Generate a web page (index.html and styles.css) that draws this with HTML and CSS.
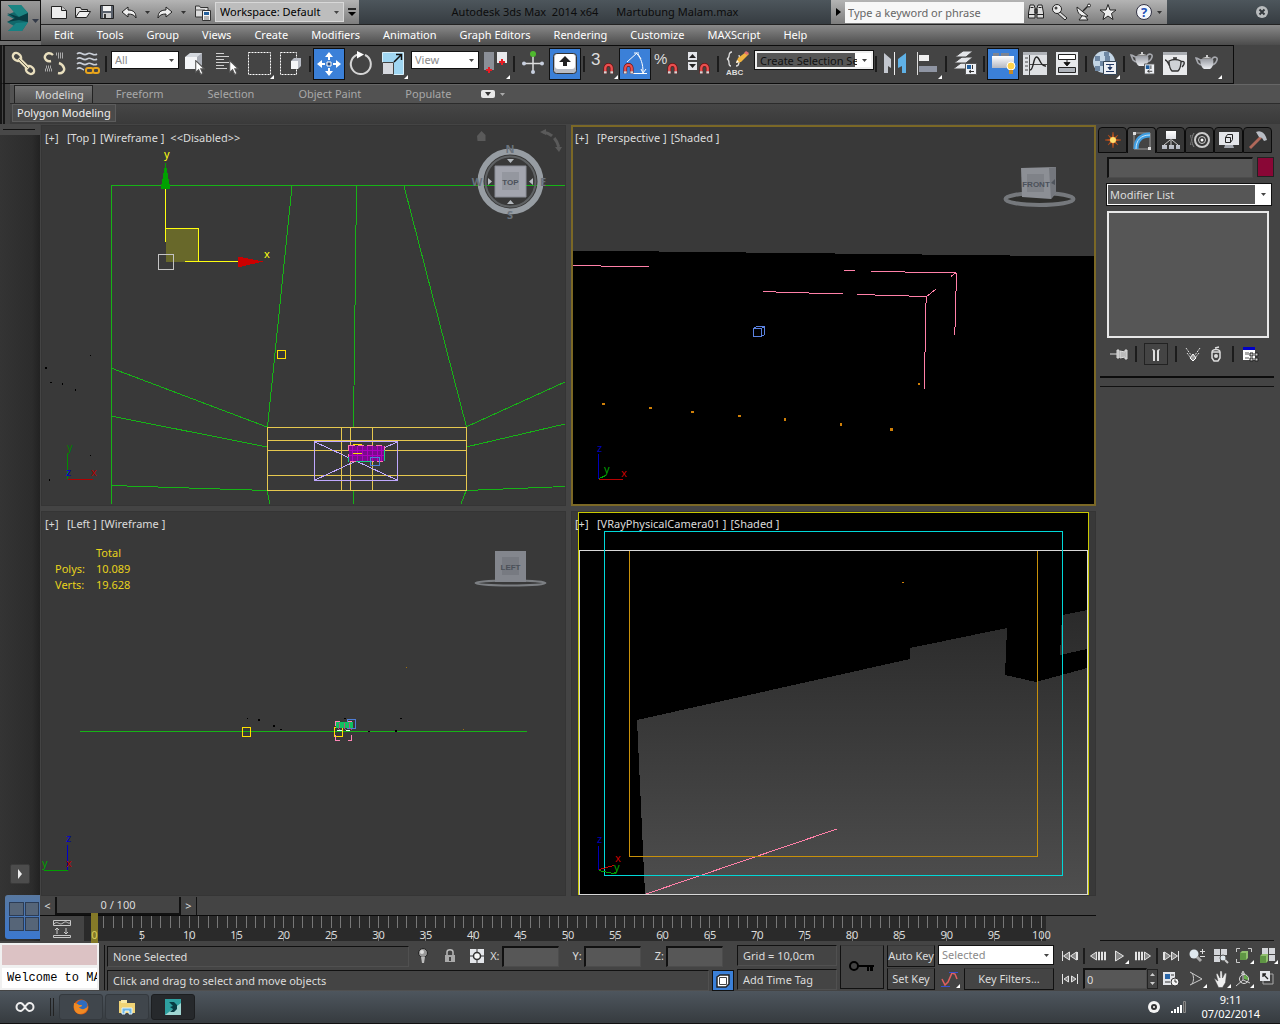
FILE: index.html
```html
<!DOCTYPE html>
<html lang="en">
	<head>
		<meta charset="UTF-8" />
		<meta name="viewport" content="width=device-width, initial-scale=1.0" />
		<title>Autodesk 3ds Max 2014 x64 - Martubung Malam.max</title>
		<link rel="stylesheet" href="styles.css">
	</head>
	<body>
		<!-- shared icon parts -->
		<svg class="defs" aria-hidden="true">
			<defs>
				<linearGradient id="silver" x1="0" y1="0" x2="0" y2="1">
					<stop offset="0" stop-color="#ffffff" />
					<stop offset="1" stop-color="#b4b8c2" />
				</linearGradient>
				<linearGradient id="pot" x1="0" y1="0" x2="0" y2="1">
					<stop offset="0" stop-color="#9a9da4" />
					<stop offset="1" stop-color="#eceef2" />
				</linearGradient>
				<linearGradient id="floor" gradientUnits="userSpaceOnUse" x1="0" y1="610" x2="0" y2="894">
					<stop offset="0" stop-color="#2a2a2a" />
					<stop offset="1" stop-color="#4e4e4e" />
				</linearGradient>
				<symbol id="magnet" viewBox="0 0 12 13">
					<path d="M2.500 12V6a3.500 3.500 0 0 1 7 0v6" fill="none" stroke="#6d1010" stroke-width="4" />
					<path d="M2.500 9.500V6a3.500 3.500 0 0 1 7 0v3.500" fill="none" stroke="#e85050" stroke-width="2.600" />
					<path d="M1 9.500h3V12H1zM8 9.500h3V12H8z" fill="#d8d8d8" />
				</symbol>
				<symbol id="corner" viewBox="0 0 4 4"><path d="M4 0v4H0z" fill="#fff" /></symbol>
				<symbol id="teapot" viewBox="0 0 24 16">
					<path d="M6 6C4 6 3 4 1 4l2 5c1 1 2 2 4 2zM17 5c2-3 6-2 5 1-.500 2-2 4-5 5" fill="none" stroke="#a6a8ae" stroke-width="1.600" />
					<path d="M6 5c-1 4 0 8 3 10h6c3-2 4-6 3-10z" fill="url(#pot)" />
					<path d="M7 4.500c2-2 8-2 10 0zM11 1h2v2h-2z" fill="#ccc" />
				</symbol>
				<symbol id="props" viewBox="0 0 12 12">
					<path d="M.5.500h11v11H.500z" fill="#eef1f5" stroke="#555" />
					<path d="M2 2h4v4H2z" fill="#225f9e" />
					<path d="M7.500 2v4M4 8.500h5M4 8.500l2-1.500M4 8.500L6 10" stroke="#333" fill="none" />
				</symbol>
				<symbol id="cursor" viewBox="0 0 9 14">
					<path d="M.5.500v11l2.700-2.400 2 4.400 2-.900-2-4.300H8.500z" fill="#fff" stroke="#555" />
				</symbol>
			</defs>
		</svg>

		<header class="header">
			<button class="app-btn" aria-label="Application menu">
				<svg width="40" height="40" viewBox="0 0 40 40">
					<path d="M7 4l13 0 7 8v9l-6 9H7l6-5-7-4 7-3-7-4 7-3z" fill="#11686b" />
					<path d="M7 4l13 0 7 8-9 4-5-5z" fill="#1c8583" />
					<path d="M6 12l12 4 9-4v9l-9-2-12 2 8-4z" fill="#083c43" />
					<path d="M7 30l8-8 12-1-6 9z" fill="#178183" />
					<path d="M31 18h7l-3.500 4z" fill="#333a48" />
				</svg>
			</button>
			<div class="titlebar">
				<div class="quick">
					<button class="qbtn" aria-label="New">
						<svg width="20" height="20" viewBox="0 0 20 20"><path d="M2.500 4.500h10l5 4v8h-15z" fill="#eee" stroke="#222" /><path d="M12.500 4.500v4h5" fill="#ccc" stroke="#222" /></svg>
					</button>
					<button class="qbtn" aria-label="Open">
						<svg width="20" height="20" viewBox="0 0 20 20"><path d="M2.500 15.500v-10h5l1 2h6v3" fill="#ddd" stroke="#222" /><path d="M2.500 15.500l4-6h11l-4 6z" fill="#f1f1f1" stroke="#222" /></svg>
					</button>
					<button class="qbtn" aria-label="Save">
						<svg width="20" height="20" viewBox="0 0 20 20"><path d="M3.500 3.500h13v13h-13z" fill="#59606b" stroke="#222" /><path d="M6 4h8v5H6z" fill="#f2f2f2" /><path d="M6 11h8v5H6z" fill="#ccc" /><path d="M7 12h2v4H7z" fill="#333" /></svg>
					</button>
					<button class="qbtn wide" aria-label="Undo">
						<svg width="36" height="20" viewBox="0 0 36 20"><path d="M3 10l6-5v3c6 0 8 3 8 8-1.500-3-4-4-8-4v3z" fill="#eee" stroke="#222" /><path d="M26 9h5l-2.500 3z" fill="#333" /></svg>
					</button>
					<button class="qbtn wide" aria-label="Redo">
						<svg width="36" height="20" viewBox="0 0 36 20"><path d="M17 10l-6-5v3c-6 0-8 3-8 8 1.500-3 4-4 8-4v3z" fill="#eee" stroke="#222" /><path d="M26 9h5l-2.500 3z" fill="#333" /></svg>
					</button>
					<button class="qbtn" aria-label="Project folder">
						<svg width="20" height="20" viewBox="0 0 20 20"><path d="M2.500 15V4h4l1 1.500H15V15z" fill="#ddd" stroke="#333" /><path d="M2 8h10" stroke="#555" /><path d="M9.500 8.500h8v10h-8z" fill="#f4f4f4" stroke="#333" /><path d="M11 10h5v3h-5z" fill="#235f9c" /><path d="M11 15h5M11 17h5" stroke="#777" /></svg>
					</button>
					<select class="workspace" aria-label="Workspace"><option>Workspace: Default</option></select>
					<button class="qbtn more" aria-label="Customize toolbar">
						<svg width="12" height="12" viewBox="0 0 12 12"><path d="M2 3h8" stroke="#000" stroke-width="1.500" /><path d="M2 6h8l-4 4z" /></svg>
					</button>
				</div>
				<div class="title"><span>Autodesk 3ds Max&nbsp; 2014 x64</span><span>Martubung Malam.max</span></div>
				<div class="info">
					<button class="qbtn expand" aria-label="Toggle search"><svg width="8" height="10" viewBox="0 0 8 10"><path d="M2 1l5 4-5 4z" /></svg></button>
					<input class="search" type="text" placeholder="Type a keyword or phrase" aria-label="Search" />
					<button class="qbtn" aria-label="Find"><svg width="20" height="20" viewBox="0 0 20 20"><path d="M4 3h4l1 3v10H2.500v-5zM12 3h4l1.500 8v5H11V6z" fill="#ddd" stroke="#222" /><path d="M9 7h2v4H9z" fill="#555" stroke="#222" /><path d="M3 12.500h6M11 12.500h6M4.500 5.500h3M12.500 5.500h3" stroke="#222" /></svg></button>
					<button class="qbtn" aria-label="Subscription"><svg width="20" height="20" viewBox="0 0 20 20"><path d="M9 9l8 7-2 2-8-7z" fill="#ddd" stroke="#222" /><circle cx="7" cy="7" r="4.500" fill="#eee" stroke="#222" /><circle cx="6" cy="6" r="1.500" fill="#444" /></svg></button>
					<button class="qbtn" aria-label="Communication"><svg width="20" height="20" viewBox="0 0 20 20"><path d="M3 5c0 7 4 10 11 9zM8 14l-3 4h9l-3-4" fill="#eee" stroke="#222" /><path d="M9 9l6-6" stroke="#222" stroke-width="1.500" /><circle cx="15" cy="3.500" r="1.500" fill="#fff" stroke="#222" /></svg></button>
					<button class="qbtn" aria-label="Favorites"><svg width="20" height="20" viewBox="0 0 20 20"><path d="M10 2.500l2 5.500h6l-4.500 3.500 1.500 6-5-3.500-5 3.500 1.500-6L2 8h6z" fill="#eee" stroke="#222" /></svg></button>
					<button class="qbtn help" aria-label="Help">
						<svg width="36" height="20" viewBox="0 0 36 20"><circle cx="13" cy="10" r="7.500" fill="#f4f6fa" stroke="#334" /><text x="13" y="15" class="help-mark">?</text><path d="M26 9h5l-2.500 3z" fill="#333" /></svg>
					</button>
				</div>
				<button class="close" aria-label="Close">
					<svg width="14" height="14" viewBox="0 0 14 14"><circle cx="7" cy="7" r="6" fill="#b9bcbe" /><path d="M4.500 4.500l5 5M9.500 4.500l-5 5" stroke="#33383c" stroke-width="2" /></svg>
				</button>
			</div>
			<nav class="menu">
				<a href="#">Edit</a><a href="#">Tools</a><a href="#">Group</a><a href="#">Views</a><a href="#">Create</a><a href="#">Modifiers</a><a href="#">Animation</a><a href="#">Graph Editors</a><a href="#">Rendering</a><a href="#">Customize</a><a href="#">MAXScript</a><a href="#">Help</a>
			</nav>
		</header>

		<div class="toolbar">
			<button class="tool" aria-label="Select and link"><svg width="30" height="30" viewBox="0 0 30 30"><g fill="none" stroke="#e9dfbe" stroke-width="2.400"><ellipse cx="9" cy="8" rx="4.500" ry="3.500" transform="rotate(40 9 8)" /><ellipse cx="22" cy="21" rx="4.500" ry="3.500" transform="rotate(40 22 21)" /><path d="M10.500 9.500l10 10" stroke-width="4" /></g><path d="M11 10l9 9" stroke="#6b6450" /></svg></button>
			<button class="tool" aria-label="Unlink selection"><svg width="30" height="30" viewBox="0 0 30 30"><path d="M11 12c-4 1-7-2-6-5s5-4 8-1M18 24c4 1 7-2 6-5s-2-4-5-5" fill="none" stroke="#e9dfbe" stroke-width="2.400" /><g stroke="#aaa" stroke-width="3" stroke-dasharray="1 1"><path d="M16 5h8M18 8h6M6 18h6M5 21h8" /></g></svg></button>
			<button class="tool" aria-label="Bind to space warp"><svg width="30" height="30" viewBox="0 0 30 30"><g fill="none" stroke="#c9ced6" stroke-width="1.600"><path d="M5 5c4-4 6 3 10 0s6 3 10 0M5 10c4-4 6 3 10 0s6 3 10 0M5 15c4-4 6 3 10 0s6 3 10 0M5 20c3-3 4 0 7 1" /></g><g fill="none" stroke="#e9a51c" stroke-width="2"><rect x="14" y="19" width="7" height="5" rx="2" /><rect x="21" y="19" width="6" height="5" rx="2" /></g></svg></button>
			<i class="sep"></i>
			<select class="combo filter" aria-label="Selection filter"><option>All</option></select>
			<button class="tool" aria-label="Select object"><svg width="30" height="30" viewBox="0 0 30 30"><path d="M5 8l5-4h12v12l-5 4H5z" fill="#d5d9df" /><path d="M5 8h12v12H5z" fill="#f5f6f8" /><path d="M17 8l5-4v12l-5 4z" fill="#a9adb6" /><use href="#cursor" x="15" y="11" width="10" height="15" /></svg></button>
			<button class="tool" aria-label="Select by name"><svg width="30" height="30" viewBox="0 0 30 30"><path d="M4 4.500h8M4 7.500h13M4 10.500h8M4 13.500h13M4 16.500h8M4 19.500h11" stroke="#d0d0d0" /><use href="#cursor" x="17" y="11" width="10" height="15" /></svg></button>
			<button class="tool" aria-label="Rectangular selection region"><svg width="30" height="30" viewBox="0 0 30 30"><path d="M4.500 3.500h22v22h-22z" fill="none" stroke="#fff" stroke-dasharray="2 1" /><use href="#corner" x="26" y="26" width="4" height="4" /></svg></button>
			<button class="tool" aria-label="Window/Crossing"><svg width="30" height="30" viewBox="0 0 30 30"><path d="M4.500 3.500h16v22h-16z" fill="none" stroke="#fff" stroke-dasharray="2 1" /><path d="M15 12l3-3h7v8l-3 3h-7z" fill="#b9bdc6" /><path d="M15 12h7v8h-7z" fill="#f5f6f8" /></svg></button>
			<i class="sep"></i>
			<button class="tool active" aria-label="Select and move"><svg width="30" height="30" viewBox="0 0 30 30"><path d="M15 3l4 5h-3v3h-2V8h-3zM15 27l4-5h-3v-3h-2v3h-3zM3 15l5-4v3h3v2H8v3zM27 15l-5-4v3h-3v2h3v3z" fill="#fff" /><path d="M13 13h4v4h-4z" fill="#2a4c80" stroke="#fff" /></svg></button>
			<button class="tool" aria-label="Select and rotate"><svg width="30" height="30" viewBox="0 0 30 30"><path d="M12 5.500A10 10 0 1 0 19 6" fill="none" stroke="#d5d5d5" stroke-width="2" /><path d="M11 2l7 3.500-7 4z" fill="#fff" /></svg></button>
			<button class="tool" aria-label="Select and uniform scale"><svg width="30" height="30" viewBox="0 0 30 30"><path d="M4.500 3.500h21v22h-21z" fill="#9fd6f2" stroke="#d8f0fb" /><path d="M4.500 13.500h11v12h-11z" fill="#d6d9df" stroke="#444" /><path d="M16 13l7-7M18 5.500h5.500V11" fill="none" stroke="#111" stroke-width="1.500" /><use href="#corner" x="26" y="26" width="4" height="4" /></svg></button>
			<select class="combo coord" aria-label="Reference coordinate system"><option>View</option></select>
			<button class="tool" aria-label="Use pivot point center"><svg width="30" height="30" viewBox="0 0 30 30"><path d="M4 3h10v18H4z" fill="#8b8f97" /><path d="M17 3h10v11H17z" fill="#e8e9ec" /><path d="M9 18v6M6 21h6M22 10v6M19 13h6" stroke="#e81c24" stroke-width="2" /><use href="#corner" x="26" y="26" width="4" height="4" /></svg></button>
			<i class="sep"></i>
			<button class="tool" aria-label="Select and manipulate"><svg width="30" height="30" viewBox="0 0 30 30"><path d="M15 6v17M6 14.500h18" stroke="#ddd" stroke-width="1.500" /><circle cx="15" cy="5" r="3" fill="#4fb82e" /><circle cx="15" cy="23" r="2" fill="#c8d0e0" /><circle cx="6" cy="14.500" r="2" fill="#c8d0e0" /><circle cx="24" cy="14.500" r="2" fill="#c8d0e0" /></svg></button>
			<button class="tool active" aria-label="Keyboard shortcut override"><svg width="30" height="30" viewBox="0 0 30 30"><rect x="3.500" y="4.500" width="23" height="20" rx="3" fill="#b8bcc4" stroke="#333" /><rect x="5" y="5" width="20" height="15" rx="3" fill="#fff" /><path d="M15 7l6 6h-4v4h-4v-4H9z" fill="#222" /></svg></button>
			<i class="sep"></i>
			<button class="tool" aria-label="Snaps toggle"><svg width="30" height="30" viewBox="0 0 30 30"><text x="3" y="16" class="glyph">3</text><use href="#magnet" x="15" y="13" width="11" height="13" /><use href="#corner" x="26" y="26" width="4" height="4" /></svg></button>
			<button class="tool active" aria-label="Angle snap toggle"><svg width="30" height="30" viewBox="0 0 30 30"><path d="M13 24.500h14M7 13L17 4M17 5c4 4 6 10 6 18M14 4l5 0M21 10l-3-5M21 20l2 4 3-4" fill="none" stroke="#fff" /><use href="#magnet" x="3" y="13" width="11" height="13" /></svg></button>
			<button class="tool" aria-label="Percent snap toggle"><svg width="30" height="30" viewBox="0 0 30 30"><text x="2" y="15" class="glyph pct">%</text><use href="#magnet" x="15" y="13" width="11" height="13" /></svg></button>
			<button class="tool" aria-label="Spinner snap toggle"><svg width="30" height="30" viewBox="0 0 30 30"><path d="M4 3h9v8H4zM4 13h9v8H4z" fill="#e4e6ea" /><path d="M5 9h7L8.500 5zM5 15h7l-3.500 4z" fill="#222" /><use href="#magnet" x="15" y="13" width="11" height="13" /></svg></button>
			<i class="sep"></i>
			<button class="tool" aria-label="Edit named selection sets"><svg width="30" height="30" viewBox="0 0 30 30"><path d="M10 3c-5 0-1 6-5 7 4 1 0 7 4 7M14 17c5 0 1-6 5-7-2-1-2-2-2-4" fill="none" stroke="#ddd" stroke-width="1.300" /><path d="M14 14l2-5 8-6 3 2-8 8z" fill="#f0b441" /><path d="M14 14l1-3 2 2z" fill="#fff" /><path d="M22 4l2-2 3 2-2 2z" fill="#e07070" /><text x="4" y="26" class="abc">ABC</text></svg></button>
			<select class="combo sets" aria-label="Named selection sets"><option>Create Selection Set</option></select>
			<i class="sep"></i>
			<button class="tool" aria-label="Mirror"><svg width="30" height="30" viewBox="0 0 30 30"><path d="M4 4l7 6v9l-3-2v7H4z" fill="#c4c8d0" /><path d="M14.500 3v23" stroke="#eee" /><path d="M26 4l-8 6v9l4-2v7h4z" fill="#5fb1e6" /></svg></button>
			<button class="tool" aria-label="Align"><svg width="30" height="30" viewBox="0 0 30 30"><path d="M5.500 3v23" stroke="#ddd" /><path d="M7 6h10v6H7z" fill="#f0f0f0" /><path d="M7 17h18v6H7z" fill="#8f95a3" /><use href="#corner" x="26" y="26" width="4" height="4" /></svg></button>
			<i class="sep"></i>
			<button class="tool" aria-label="Layer manager"><svg width="30" height="30" viewBox="0 0 30 30"><g fill="#e3e5e9" stroke="#444"><path d="M3 20l8-6h11l-7 6z" /><path d="M4 14l8-6h11l-7 6z" /><path d="M5 8l8-6h10l-7 6z" /></g><use href="#props" x="15" y="14" width="12" height="12" /></svg></button>
			<i class="sep"></i>
			<button class="tool active" aria-label="Toggle ribbon"><svg width="30" height="30" viewBox="0 0 30 30"><path d="M4 7h22v12H4z" fill="url(#silver)" /><path d="M5 4h6v3H5zM13 4h8v3h-8z" fill="#7d8491" /><circle cx="23" cy="17" r="4" fill="#ffd24a" stroke="#fff" /><path d="M21 21h4v4h-4z" fill="#c88a25" /></svg></button>
			<button class="tool" aria-label="Curve editor"><svg width="30" height="30" viewBox="0 0 30 30"><path d="M3 3h24v23H3z" fill="#dfe1e4" /><path d="M3 3h24v3H3z" fill="#b0b3b8" /><path d="M9.500 6v20M5 9h3M5 13h3M5 17h3M5 21h3M9 15.500h18" stroke="#444" /><path d="M10 21c4 0 3-13 6.500-13S20 18 26 17" fill="none" stroke="#222" stroke-width="1.400" /></svg></button>
			<button class="tool" aria-label="Schematic view"><svg width="30" height="30" viewBox="0 0 30 30"><path d="M4 3h22v23H4z" fill="#e6e8eb" /><path d="M6.500 5.500h17v5h-17z" fill="#fff" stroke="#222" /><path d="M6.500 18.500h17v5h-17z" fill="#aeb3ba" stroke="#222" /><path d="M15 11v5M12 13.500h6l-3 3.500z" stroke="#222" /></svg></button>
			<i class="sep"></i>
			<button class="tool" aria-label="Material editor"><svg width="30" height="30" viewBox="0 0 30 30"><circle cx="14" cy="13" r="11" fill="#c4d6e6" /><path d="M5 7h5v5H5zM14 3h5v4h-5zM10 12h5v5h-5zM15 7h5v5h-5zM5 17h5v5H5zM20 12h5v5h-5z" fill="#6f88a4" /><path d="M13.500 12.500h13v13h-13z" fill="#eef0f4" stroke="#345" /><path d="M16 15.500h8M16 22.500h8M20 16v5M18 18.500h4l-2 2z" stroke="#223a66" /><use href="#corner" x="26" y="26" width="4" height="4" /></svg></button>
			<i class="sep"></i>
			<button class="tool" aria-label="Render setup"><svg width="30" height="30" viewBox="0 0 30 30"><use href="#teapot" x="2" y="2" width="24" height="16" /><use href="#props" x="16" y="14" width="11" height="12" /></svg></button>
			<button class="tool" aria-label="Rendered frame window"><svg width="30" height="30" viewBox="0 0 30 30"><path d="M3 3h24v23H3z" fill="#e9eaec" /><path d="M3 3h24v3H3z" fill="#aaadb2" /><path d="M5 11c3 0 3 5 5 6M21 13c3-2 5 1 1 5M9 12c0 5 1 8 3 10h6c2-2 3-5 3-10-4-2-8-2-12 0zM13 9h4" fill="#cfd2d6" stroke="#333" stroke-width="1.300" /></svg></button>
			<button class="tool" aria-label="Render production"><svg width="30" height="30" viewBox="0 0 30 30"><use href="#teapot" x="3" y="5" width="24" height="16" /><use href="#corner" x="26" y="26" width="4" height="4" /></svg></button>
		</div>

		<div class="ribbon">
			<div class="tabs">
				<button class="tab current">Modeling</button>
				<button class="tab">Freeform</button>
				<button class="tab">Selection</button>
				<button class="tab">Object Paint</button>
				<button class="tab">Populate</button>
				<button class="tab-menu" aria-label="Ribbon display">
					<svg width="26" height="10" viewBox="0 0 26 10"><rect x="1" y="1" width="14" height="8" rx="2" fill="#e8e8e8" /><path d="M5 3h6L8 7z" fill="#333" /><path d="M20 4h5l-2.500 3z" fill="#aaa" /></svg>
				</button>
			</div>
			<div class="ribbon-body"><button class="panel-btn">Polygon Modeling</button></div>
		</div>

		<main class="main">
			<aside class="strip">
				<i class="strip-grip"></i>
				<button class="flyout" aria-label="Expand layouts"><svg width="8" height="10" viewBox="0 0 8 10"><path d="M2 0l4 5-4 5z" fill="#eee" /></svg></button>
				<button class="layout" aria-label="Four viewport layout"><i></i><i></i><i></i><i></i></button>
			</aside>

			<div class="center">
				<div class="viewports">
					<section class="viewport">
						<svg class="scene" viewBox="41 125 525 381" preserveAspectRatio="xMinYMin slice" shape-rendering="crispEdges">
							<g fill="none" stroke="#16b316">
								<path d="M565 185.500H111.500V504" />
								<path d="M292 186L267.500 427M356.500 186L353.500 427M404 186L466.500 427M353.500 490v14" />
								<path d="M111 368l156 59M111 416l156 31M111 485.500l156 5M267 491l3 13" />
								<path d="M466 427l99-45M466 447l99-23M466 490.500l99-4M466 491l-5 13" />
							</g>
							<path d="M267.500 427.500h199v63h-199zM267 440.500h199M267 450.500h199M267 475.500h199M341.500 427v63M350.500 427v63M372.500 427v63" fill="none" stroke="#e6c84f" />
							<path d="M314.500 441.500h83v39h-83zM315 442l82 38M397 442l-82 38" fill="none" stroke="#bfa8ff" />
							<g fill="none">
								<path d="M349 446h35v15h-35z" fill="#7a0a8c" />
								<path d="M352.500 446v15M357.500 446v15M362.500 446v15M367.500 446v15M372.500 446v15M377.500 446v15M381.500 446v15M349 450.500h35M349 455.500h35" stroke="#b000c0" />
								<path d="M348.500 445.500h36v16h-36z" stroke="#ff77b0" stroke-dasharray="6 3" />
								<path d="M348.500 462v-5M356 461.500h16M384.500 450v11" stroke="#10d080" />
								<path d="M353 444.500h9M353 453.500h9" stroke="#ffe000" />
								<path d="M370.500 457.500h9v8h-9z" stroke="#4f7fd8" />
							</g>
							<!-- move gizmo -->
							<path d="M165.500 228.500h33v33h-33z" fill="#68682a" />
							<path d="M165.500 189v53M165 228.500h33.500v33M185 261.500h53" fill="none" stroke="#ffff10" />
							<path d="M158.500 254.500h15v15h-15z" fill="none" stroke="#c4c4c4" />
							<path d="M165.500 163l5 26h-10z" fill="#00a000" />
							<path d="M263 261.500l-25-5v11z" fill="#cc0000" />
							<path d="M277.500 350.500h8v8h-8z" fill="none" stroke="#ffe000" />
							<path d="M45 367h2v2h-2zM50 382h2v1h-2zM62 383h1v2h-1zM75 389h1v2h-1zM90 355h1v1h-1zM90 455h1v1h-1zM49 479h1v2h-1z" fill="#000" />
							<path d="M67.500 454v25" stroke="#009000" />
							<path d="M68 479.500h25" stroke="#b00000" />
							<g class="axis">
								<text x="164" y="158" fill="#ffff10">y</text>
								<text x="264" y="258" fill="#ffff10">x</text>
								<text x="67" y="451" fill="#008000">y</text>
								<text x="66" y="476" fill="#0000d0">z</text>
								<text x="91" y="476" fill="#b00000">x</text>
							</g>
							<!-- view cube with compass -->
							<g shape-rendering="auto">
								<circle cx="510.500" cy="181.500" r="30" fill="none" stroke="#979da3" stroke-width="6" />
								<circle cx="510.500" cy="181.500" r="25" fill="none" stroke="#5f6264" stroke-width="2" />
								<path d="M495 166h31v31h-31z" fill="#a3a5ae" stroke="#8a8d96" />
								<path d="M502 172h17v18h-17z" fill="#94979f" />
								<path d="M507 159h7l-3.500 4zM507 204h7l-3.500-4zM488 178v7l4-3.500zM533 178v7l-4-3.500z" fill="#b5babf" />
								<path d="M477 136l4.500-5 4 4v6h-8z" fill="#5a5a5a" />
								<path d="M543 132c8 1 14 7 16 16" fill="none" stroke="#5a5a5a" stroke-width="3" stroke-dasharray="10 3" />
								<path d="M540 132l6-3v6zM559 152l-4-5h7z" fill="#5a5a5a" />
								<g class="compass">
									<text x="510" y="153">N</text><text x="510" y="219">S</text><text x="477" y="186">W</text><text x="543" y="186">E</text>
								</g>
								<text x="510.500" y="185" class="cube-text">TOP</text>
							</g>
						</svg>
						<div class="label"><span>[+]</span><span>[Top ]</span><span>[Wireframe ]</span><span class="state">&lt;&lt;Disabled&gt;&gt;</span></div>
					</section>

					<section class="viewport selected">
						<svg class="scene" viewBox="571 125 525 381" preserveAspectRatio="xMinYMin slice" shape-rendering="crispEdges">
							<path d="M571 250.500L1096 256.500V506H571z" fill="#000" />
							<g fill="none" stroke="#ff80a8">
								<path d="M573 265.500h28M601 266.500h48M844 270.500h11M871 271.500h34M905 272.500h51M956.500 273v18M955.500 291v36M954.500 327v8M951 276.500l5-4" />
								<path d="M763 291.500h13M776 292.500h33M809 293.500h34M857 294.500h18M875 295.500h34M909 296.500h17M926.500 296v7M925.500 303v49M924.500 352v37M926 297l10-8" />
							</g>
							<path d="M753.500 328.500h8v8h-8zM753.500 328.500l3-2h8v8l-3 2M761.500 328.500l3-2" fill="none" stroke="#5b82e0" />
							<path d="M602 403h3v2h-3zM649 407h3v2h-3zM691 411h3v2h-3zM738 415h3v2h-3zM784 418h2v3h-2zM840 423h2v3h-2zM890 428h3v3h-3zM918 383h2v2h-2z" fill="#d08008" />
							<path d="M598.500 454v25" stroke="#0000b8" />
							<path d="M599 479.500h24" stroke="#b80000" />
							<path d="M599 478.500l7-3" stroke="#00a000" />
							<g class="axis">
								<text x="597" y="452" fill="#0000b8">z</text>
								<text x="604" y="473" fill="#00a000">y</text>
								<text x="621" y="477" fill="#c80000">x</text>
							</g>
							<g shape-rendering="auto">
								<ellipse cx="1039.500" cy="199" rx="34" ry="6" fill="#2f2f2d" stroke="#75787c" stroke-width="4" />
								<path d="M1021 168l35-1v26l-5 6-29-2z" fill="#8c8f95" />
								<path d="M1049 168l7-1v26l-5 6z" fill="#74777d" />
								<path d="M1027 174h17v18h-17z" fill="#7f8288" />
								<path d="M1051 183l4-4v6z" fill="#4f545c" />
								<text x="1036" y="187" class="cube-text">FRONT</text>
							</g>
						</svg>
						<div class="label"><span>[+]</span><span>[Perspective ]</span><span>[Shaded ]</span></div>
					</section>

					<section class="viewport">
						<svg class="scene" viewBox="41 511 525 385" preserveAspectRatio="xMinYMin slice" shape-rendering="crispEdges">
							<path d="M80 731.500h447" stroke="#16b316" />
							<path d="M242.500 727.500h8v9h-8zM334.500 727.500h8v9h-8z" fill="none" stroke="#ffe000" />
							<path d="M347.500 719.500h8v9h-8z" fill="none" stroke="#4f7fd8" />
							<path d="M336 722h17v6h-17z" fill="#10c060" />
							<path d="M338 728l2 2M344 728l2 2M350 728l2 2M339.500 723v5M344.500 723v5M349.500 723v5" stroke="#b05080" />
							<path d="M337 730h5M346 730h4" stroke="#e0fff0" />
							<path d="M335.500 726v-4.500h4M348 721.500h3.500M335.500 735v5.500h4M351.500 735v5.500h-4" fill="none" stroke="#ff88b8" />
							<path d="M247 718h1v1h-1zM258 719h2v2h-2zM273 725h2v2h-2zM280 729h2v1h-2zM344 718h2v1h-2zM400 718h2v1h-2zM368 731h2v1h-2zM395 730h2v2h-2z" fill="#000" />
							<path d="M406 667h1v1h-1zM463 729h1v1h-1z" fill="#a07010" />
							<path d="M67.500 845v25" stroke="#0000c8" />
							<path d="M44 870.500h24" stroke="#00a000" />
							<g class="axis">
								<text x="66" y="842" fill="#0000c8">z</text>
								<text x="42" y="867" fill="#00a000">y</text>
								<text x="66" y="867" fill="#b00000">x</text>
							</g>
							<g shape-rendering="auto">
								<ellipse cx="510.500" cy="583" rx="35" ry="2.500" fill="none" stroke="#7c7f83" stroke-width="2" />
								<path d="M495 551h31v31h-31z" fill="#83868d" />
								<path d="M502 557h17v18h-17z" fill="#777a81" />
								<text x="510.500" y="570" class="cube-text">LEFT</text>
							</g>
						</svg>
						<div class="label"><span>[+]</span><span>[Left ]</span><span>[Wireframe ]</span></div>
						<table class="stats">
							<tr><td></td><th>Total</th></tr>
							<tr><td>Polys:</td><td>10.089</td></tr>
							<tr><td>Verts:</td><td>19.628</td></tr>
						</table>
					</section>

					<section class="viewport">
						<svg class="scene" viewBox="571 511 525 385" preserveAspectRatio="xMinYMin slice" shape-rendering="crispEdges">
							<path d="M578 512h511v383H578z" fill="#000" />
							<path d="M637 720l273-61v-11l97-20-2 47 31 7 51-14v226H645zM1062 615l25-5v39l-27 6z" fill="url(#floor)" />
							<path d="M646 894l191-65" stroke="#ff80a8" />
							<path d="M629.500 550v306.500h408V550" fill="none" stroke="#c8900a" />
							<path d="M578.500 895V512.500h510V895" fill="none" stroke="#c8c800" />
							<path d="M579.500 550.500h508v344h-508z" fill="none" stroke="#d8d8d8" />
							<path d="M604.500 531.500h458v344h-458z" fill="none" stroke="#00d8d8" />
							<path d="M902 582h2v1h-2z" fill="#d08008" />
							<path d="M598.500 846v24" stroke="#0000b8" />
							<path d="M599 869.500l15-4" stroke="#c80000" />
							<path d="M599 870.500l14 3 4-2" fill="none" stroke="#00a000" />
							<g class="axis">
								<text x="597" y="843" fill="#0000b8">z</text>
								<text x="615" y="862" fill="#c80000">x</text>
								<text x="614" y="871" fill="#00a000">y</text>
							</g>
						</svg>
						<div class="label"><span>[+]</span><span>[VRayPhysicalCamera01 ]</span><span>[Shaded ]</span></div>
					</section>
				</div>

				<div class="slider">
					<button class="step" aria-label="Previous frame">&lt;</button>
					<button class="thumb">0 / 100</button>
					<button class="step" aria-label="Next frame">&gt;</button>
				</div>
				<div class="trackbar">
					<button class="curve-btn" aria-label="Open mini curve editor">
						<svg width="18" height="18" viewBox="0 0 18 18"><path d="M.5.500h17v5H.500zM.500 15.500h17v2H.500zM1 4c4-4 5 2 9-1s4 1 7 0M4 14V8M2 10l2-2 2 2M13 8v6M11 12l2 2 2-2" fill="none" stroke="#c8c8c8" /></svg>
					</button>
					<div class="ruler" id="ruler"></div>
				</div>
			</div>

			<aside class="command">
				<div class="cmd-tabs">
					<button class="cmd-tab" aria-label="Create"><svg width="20" height="20" viewBox="0 0 20 20"><path d="M10 2l1 6 4-3-3 4 6 1-6 1 3 4-4-3-1 6-1-6-4 3 3-4-6-1 6-1-3-4 4 3z" fill="#e86a20" stroke="#b04818" stroke-width=".5" /><circle cx="10" cy="10" r="3" fill="#ffe070" /></svg></button>
					<button class="cmd-tab current" aria-label="Modify"><svg width="20" height="20" viewBox="0 0 20 20"><path d="M2 2h16v16H2z" fill="none" stroke="#999" /><path d="M4 18C4 9 9 4 18 4" fill="none" stroke="#3f9de0" stroke-width="5" /><path d="M4 18C4 9 9 4 18 4" fill="none" stroke="#c8e6fa" /><path d="M1 1h3v3H1zM16 16h3v3h-3z" fill="#ddd" /></svg></button>
					<button class="cmd-tab" aria-label="Hierarchy"><svg width="20" height="20" viewBox="0 0 20 20"><path d="M5 1h10v8H5zM1 15h5v4H1zM8 15h5v4H8zM15 15h4v4h-4z" fill="url(#silver)" /><path d="M10 9v6M9 10l-6 5M11 10l6 5" stroke="#ccc" /></svg></button>
					<button class="cmd-tab" aria-label="Motion"><svg width="20" height="20" viewBox="0 0 20 20"><g fill="none" stroke="#ccc"><circle cx="12" cy="10" r="7" stroke-width="2" /><circle cx="12" cy="10" r="3.500" /><path d="M4 3c-3 5-3 9 0 14M1 5c-2 4-2 6 0 10" stroke="#888" /></g><circle cx="12" cy="10" r="1.500" fill="#fff" /></svg></button>
					<button class="cmd-tab" aria-label="Display"><svg width="20" height="20" viewBox="0 0 20 20"><path d="M0 2h20v13H0z" fill="#e4e6ea" /><path d="M6 15h8l1 3H5z" fill="#a4a8b0" /><path d="M6.500 7.500h5v5h-5zM6.500 7.500l2-3h5v5l-2 3" fill="none" stroke="#222" /></svg></button>
					<button class="cmd-tab" aria-label="Utilities"><svg width="20" height="20" viewBox="0 0 20 20"><path d="M1 17L12 6l2 2L3 19z" fill="#b0685a" /><path d="M8 2c4-2 8 0 10 5l1 3-3 1-2-3-3-1z" fill="#b8bcc4" /></svg></button>
				</div>
				<div class="cmd-body">
					<div class="name-row">
						<input class="field" type="text" aria-label="Object name" />
						<button class="swatch" aria-label="Object color"></button>
					</div>
					<select class="modifiers" aria-label="Modifier list"><option>Modifier List</option></select>
					<div class="stack"></div>
					<div class="stack-tools">
						<button class="mini" aria-label="Pin stack"><svg width="18" height="18" viewBox="0 0 18 18"><path d="M0 9h7M7 5h2v8H7zM10 6l5 1V5h2v9h-2v-2l-5 1z" stroke="#ddd" fill="#bbb" /></svg></button>
						<i class="sep"></i>
						<button class="mini pressed" aria-label="Show end result"><svg width="18" height="18" viewBox="0 0 18 18"><path d="M5 4c2 0 3 1 3 2v10H6V6zM13 4c-2 0-3 1-3 2v10h2V6z" fill="#ddd" /></svg></button>
						<i class="sep"></i>
						<button class="mini" aria-label="Make unique"><svg width="18" height="18" viewBox="0 0 18 18"><path d="M2 3l5 7M16 3l-5 7M3 8l4 5M15 8l-4 5" stroke="#ddd" fill="none" stroke-dasharray="2 1" /><path d="M9 9l3 4-3 3-3-3z" fill="#999" stroke="#fff" /></svg></button>
						<button class="mini" aria-label="Remove modifier"><svg width="18" height="18" viewBox="0 0 18 18"><path d="M5 7h8v6l-2 3H7l-2-3zM5 6c2-2 6-2 8 0M8 3l4-1" stroke="#ddd" fill="none" stroke-width="1.500" /><circle cx="9" cy="11" r="2" fill="#ddd" /></svg></button>
						<i class="sep"></i>
						<button class="mini" aria-label="Configure modifier sets"><svg width="18" height="18" viewBox="0 0 18 18"><path d="M2 2h12v13H2z" fill="#fff" /><path d="M2 2h12v3H2z" fill="#0000c8" /><path d="M4 7h4v3H4zM4 12h4v2H4z" fill="#aaa" /><path d="M9 8h3v3H9zM14 8h3v3h-3zM9 13h3v3H9zM14 13h3v3h-3z" fill="#ccc" stroke="#222" /></svg></button>
					</div>
				</div>
				<div class="rollout"></div>
			</aside>
		</main>

		<footer class="status">
			<div class="listener">
				<div class="macro"></div>
				<input class="script" type="text" value="Welcome to MAXScript." aria-label="MAXScript listener" />
			</div>
			<div class="prompt">
				<div class="row">
					<output class="box grow">None Selected</output>
					<button class="mini lamp" aria-label="Isolate"><svg width="16" height="18" viewBox="0 0 16 18"><circle cx="8" cy="6" r="4.500" fill="#999" stroke="#222" /><circle cx="7" cy="5" r="2" fill="#ddd" /><path d="M6 10h4l-1 6H7z" fill="#bbb" /></svg></button>
					<button class="mini" aria-label="Selection lock"><svg width="16" height="18" viewBox="0 0 16 18"><path d="M5 8V5c0-3 6-3 6 0v3" fill="none" stroke="#bbb" stroke-width="1.500" /><path d="M3 8h10v7H3z" fill="#aaa" /><path d="M7 10h2v4H7z" fill="#444" /></svg></button>
					<button class="mini" aria-label="Absolute mode"><svg width="16" height="18" viewBox="0 0 16 18"><path d="M1 2h14v14H1z" fill="#e4e6ea" /><circle cx="8" cy="9" r="3.500" fill="#f8f8f8" stroke="#333" stroke-width="1.500" /><path d="M8 2v4M8 12v4M1 9h4M11 9h4" stroke="#333" /></svg></button>
					<label class="coord-field">X:<input class="field" type="text" /></label>
					<label class="coord-field">Y:<input class="field" type="text" /></label>
					<label class="coord-field">Z:<input class="field" type="text" /></label>
				</div>
				<div class="row">
					<output class="box grow">Click and drag to select and move objects</output>
					<button class="cube-btn" aria-label="Adaptive degradation"><svg width="20" height="20" viewBox="0 0 20 20"><path d="M4 6l3-2h9v9l-3 3H4z" fill="#fff" stroke="#222" stroke-width="1.500" /><path d="M6.500 6.500h7v7h-7z" fill="#fff" stroke="#444" /></svg></button>
				</div>
			</div>
			<div class="grid-col">
				<output class="box">Grid = 10,0cm</output>
				<button class="box tag">Add Time Tag</button>
			</div>
			<button class="key-btn" aria-label="Set keys"><svg width="26" height="14" viewBox="0 0 26 14"><circle cx="5" cy="6" r="4" fill="none" stroke="#000" stroke-width="2" /><path d="M9 5h16v2H9zM18 7h2v4h-2zM21 7h3v4h-3z" /></svg></button>
			<div class="key-col">
				<button class="flat">Auto Key</button>
				<button class="flat">Set Key</button>
			</div>
			<div class="filter-col">
				<select class="combo keymode" aria-label="Key mode"><option>Selected</option></select>
				<div class="row">
					<button class="mini tangent" aria-label="Default in/out tangents"><svg width="20" height="18" viewBox="0 0 20 18"><path d="M1 9l3 6 3-3 4-9 3 1 2 5" fill="none" stroke="#e06060" stroke-width="1.500" /><path d="M0 16.500h9M8 2.500h9" stroke="#3a50d0" /><use href="#corner" x="15" y="14" width="4" height="4" /></svg></button>
					<button class="flat filters">Key Filters...</button>
				</div>
			</div>
			<div class="play">
				<div class="row">
					<button class="mini" aria-label="Go to start"><svg width="18" height="16" viewBox="0 0 18 16"><path d="M1.500 3v10M2.500 8l6-4v8zM9.500 8l6-4v8zM16.500 4v8" class="pl" /></svg></button>
					<i class="sep"></i>
					<button class="mini" aria-label="Previous frame"><svg width="18" height="16" viewBox="0 0 18 16"><path d="M1.500 8l6-4v8zM9.500 4h1v8h-1zM12.500 4h1v8h-1zM15.500 4h1v8h-1z" class="pl" /></svg></button>
					<button class="mini" aria-label="Play"><svg width="18" height="16" viewBox="0 0 18 16"><path d="M4.500 3l8 5-8 5z" class="pl" /><use href="#corner" x="14" y="12" width="4" height="4" /></svg></button>
					<button class="mini" aria-label="Next frame"><svg width="18" height="16" viewBox="0 0 18 16"><path d="M16.500 8l-6-4v8zM1.500 4h1v8h-1zM4.500 4h1v8h-1zM7.500 4h1v8h-1z" class="pl" /></svg></button>
					<i class="sep"></i>
					<button class="mini" aria-label="Go to end"><svg width="18" height="16" viewBox="0 0 18 16"><path d="M16.500 3v10M15.500 8l-6-4v8zM8.500 8l-6-4v8zM1.500 4v8" class="pl" /></svg></button>
				</div>
				<div class="row">
					<button class="mini" aria-label="Key mode toggle"><svg width="18" height="16" viewBox="0 0 18 16"><path d="M1.500 3v10M16.500 3v10M7.500 5L3 8l4.500 3zM10.500 5L15 8l-4.500 3z" class="pl" /></svg></button>
					<div class="row spinner">
						<input class="field frame" type="text" value="0" aria-label="Current frame" />
						<button class="spin" aria-label="Frame spinner"><svg width="9" height="16" viewBox="0 0 9 16"><path d="M2 5h5L4.500 2zM2 11h5l-2.500 3z" fill="#ccc" /></svg></button>
					</div>
					<button class="mini" aria-label="Time configuration"><svg width="18" height="16" viewBox="0 0 18 16"><path d="M1 1h12v13H1z" fill="#e4e6ea" /><path d="M3 3h5v5H3z" fill="#2a66a8" /><path d="M9 4h3M3 11h5" stroke="#333" /><circle cx="13" cy="11" r="4" fill="#f4f4f4" stroke="#333" /><path d="M13 8.500V11h2" fill="none" stroke="#333" /></svg></button>
				</div>
			</div>
			<div class="nav">
				<button class="mini" aria-label="Zoom"><svg width="20" height="18" viewBox="0 0 20 18"><circle cx="7" cy="7" r="4.500" fill="#dfe8ee" /><path d="M10 10l4 4" stroke="#aaa" stroke-width="3" /><path d="M13 4.500h5M15.500 2v5M13 9.500h5" stroke="#ddd" /></svg></button>
				<button class="mini" aria-label="Zoom all"><svg width="20" height="18" viewBox="0 0 20 18"><path d="M3 2h6v6H3zM10 2h6v6h-6zM3 9h6v6H3z" fill="#d4d6da" /><circle cx="12" cy="11" r="3" fill="#dfe8ee" stroke="#555" /><path d="M14 13l3 3" stroke="#ccc" stroke-width="2" /></svg></button>
				<button class="mini" aria-label="Zoom extents"><svg width="20" height="18" viewBox="0 0 20 18"><path d="M2.500 5V1.500H6M14 1.500h3.500V5M2.500 12v3.500H6" fill="none" stroke="#ccc" /><path d="M6 6l2-2h6v7l-2 2H6z" fill="#8fbf6c" /><path d="M6 6h6v7H6z" fill="#5f9644" /><use href="#corner" x="16" y="13" width="4" height="4" /></svg></button>
				<button class="mini" aria-label="Zoom extents all"><svg width="20" height="18" viewBox="0 0 20 18"><path d="M4 1h6v6H4zM11 1h6v6h-6zM11 8h6v6h-6z" fill="#d4d6da" /><path d="M2 9l2-2h6v7l-2 2H2z" fill="#8fbf6c" /><path d="M2 9h6v7H2z" fill="#5f9644" /><use href="#corner" x="16" y="13" width="4" height="4" /></svg></button>
				<button class="mini" aria-label="Field of view"><svg width="20" height="18" viewBox="0 0 20 18"><path d="M3 2l12 7-12 6M5 3c2 3 2 8 0 11" fill="none" stroke="#ccc" /><use href="#corner" x="16" y="14" width="4" height="4" /></svg></button>
				<button class="mini" aria-label="Pan view"><svg width="20" height="18" viewBox="0 0 20 18"><path d="M3 8l4 3-2-7 1.500-.500L9 8V1h2l.500 7L14 3l1.500.500-1 9-3 5h-4z" fill="#eee" stroke="#444" stroke-width=".5" /><use href="#corner" x="16" y="14" width="4" height="4" /></svg></button>
				<button class="mini" aria-label="Orbit"><svg width="20" height="18" viewBox="0 0 20 18"><path d="M9 2v8l7 3M9 10l-7 6M9 1L7.500 4h3z" fill="none" stroke="#ccc" /><circle cx="10" cy="9" r="4.500" fill="none" stroke="#ddd" /><path d="M10 9V5a4 4 0 0 1 4 5z" fill="#6ab04c" /><use href="#corner" x="16" y="14" width="4" height="4" /></svg></button>
				<button class="mini" aria-label="Maximize viewport"><svg width="20" height="18" viewBox="0 0 20 18"><path d="M2 1h10v10H2z" fill="#e4e6ea" /><path d="M12 4h3v10H5v-3" fill="none" stroke="#aaa" /><path d="M5 4l5 5M5 7V4h3" fill="none" stroke="#222" stroke-width="1.300" /></svg></button>
			</div>
		</footer>

		<div class="taskbar">
			<button class="start" aria-label="Start"><svg width="20" height="12" viewBox="0 0 20 12"><path d="M10 6C8 3 7 2 5.500 2a4 4 0 0 0 0 8C7 10 8 9 10 6s3-4 4.500-4a4 4 0 0 1 0 8C13 10 12 9 10 6z" fill="none" stroke="#eee" stroke-width="2" /></svg></button>
			<i class="task-sep"></i>
			<button class="task" aria-label="Firefox"><svg width="16" height="16" viewBox="0 0 16 16"><circle cx="8" cy="8" r="7.500" fill="#d85a14" /><circle cx="9" cy="6.500" r="5.500" fill="#2d6cc0" /><path d="M1 4c2 0 4 1 5 2l3 0c0 2-2 2-3 2 2 3 6 3 9-1 0 5-4 8-8 8C3 15 0 11 1 4z" fill="#f08a24" /></svg></button>
			<button class="task" aria-label="File Explorer"><svg width="18" height="16" viewBox="0 0 18 16"><path d="M1 2h6l1 2h9v10H1z" fill="#f0d375" /><path d="M3 1h6v3H3z" fill="#f8e9a8" /><path d="M4 15V9h10v6h-3v-3H7v3z" fill="#6fb7e6" stroke="#e4f4ff" /></svg></button>
			<button class="task open" aria-label="3ds Max"><svg width="16" height="16" viewBox="0 0 16 16"><path d="M0 0h16v16H0z" fill="#2ea0a0" /><path d="M0 16L16 4v12z" fill="#9fd6d2" /><path d="M4 3h5l3 3v4l-3 3H5l3-3-3-2 3-1z" fill="#083c43" /></svg></button>
			<div class="tray">
				<svg width="14" height="14" viewBox="0 0 14 14"><circle cx="7" cy="7" r="6" fill="#f4f4f4" /><circle cx="7" cy="7" r="3" fill="#333" /><circle cx="7" cy="7" r="1" fill="#fff" /></svg>
				<svg width="16" height="12" viewBox="0 0 16 12"><path d="M0 10h2v2H0zM3 8h2v4H3zM6 6h2v6H6zM9 4h2v8H9z" fill="#fff" /><path d="M12.500.500h2v11h-2z" fill="#555" stroke="#888" /></svg>
				<div class="clock"><span>9:11</span><span>07/02/2014</span></div>
			</div>
		</div>

		<script>
			// build the frame ruler, a number on every fifth frame
			const ruler = document.getElementById("ruler");
			for (let frame = 0; frame <= 100; frame++) {
				const tick = document.createElement("span");
				tick.className = "tick";
				if (frame % 5 === 0) {
					tick.classList.add("major");
					tick.textContent = frame;
				}
				if (frame === 0) {
					tick.classList.add("now");
				}
				ruler.appendChild(tick);
			}
		</script>
	</body>
</html>
```
FILE: styles.css
```css
* {
	box-sizing: border-box;
}

body {
	display: flex;
	flex-direction: column;
	min-height: 100vh;
	margin: 0;
	background-color: #444;
	color: #dcdcdc;
	font-family: "Noto Sans", sans-serif;
	font-size: 11px;
	line-height: 16px;
}

button,
input,
select {
	margin: 0;
	padding: 0;
	border: none;
	border-radius: 0;
	background: none;
	color: inherit;
	font: inherit;
	outline: none;
}

button {
	display: flex;
	align-items: center;
	justify-content: center;
	flex-shrink: 0;
}

a {
	color: inherit;
	text-decoration: none;
}

svg {
	display: block;
	flex-shrink: 0;
}

select {
	appearance: none;
	background-repeat: no-repeat;
	background-position: right 4px center;
	background-image: url("data:image/svg+xml,%3Csvg xmlns='http://www.w3.org/2000/svg' width='5' height='3'%3E%3Cpath d='M0 0h5L2.500 3z' fill='%23444'/%3E%3C/svg%3E");
}

.defs {
	position: absolute;
	width: 0;
	height: 0;
}

.sep {
	flex-shrink: 0;
	width: 2px;
	height: 16px;
	margin: 0 2px;
	background-color: #1c1c1c;
}

.row {
	display: flex;
	align-items: center;
}

/* title bar and menu */
.header {
	display: grid;
	grid-template-columns: 41px 1fr;
	grid-template-rows: 25px 20px;
	background: linear-gradient(#858585, #4a4a4a) 0 25px no-repeat;
}

.app-btn {
	grid-row: 1 / 3;
	height: 41px;
	border: 1px solid #111;
	background-image: linear-gradient(#999, #636363);
}

.titlebar {
	display: flex;
	align-items: stretch;
	background-image: linear-gradient(#4d565c, #363c41);
	border-bottom: 1px solid #222;
}

.quick,
.info {
	display: flex;
	align-items: center;
	background-image: linear-gradient(#b4b4b4, #7d7d7d);
}

.quick {
	padding-left: 6px;
}

.qbtn {
	width: 24px;
	height: 22px;
}

.qbtn.wide,
.qbtn.help {
	width: 36px;
}

.qbtn.help {
	margin-left: 11px;
}

.qbtn.more {
	width: 15px;
}

.qbtn.expand {
	width: 14px;
}

.workspace {
	width: 129px;
	height: 20px;
	padding-left: 4px;
	background-color: #bdbdbd;
	border: 1px solid #d8d8d8;
	color: #000;
}

.title {
	display: flex;
	flex: 1;
	justify-content: center;
	align-items: center;
	gap: 18px;
	color: #0c0c0c;
}

.search {
	width: 179px;
	height: 21px;
	padding-left: 3px;
	background-color: #f7f7f7;
	color: #000;
}

.search::placeholder {
	color: #666;
	opacity: 1;
}

.help-mark {
	fill: #2250b8;
	font-size: 13px;
	font-weight: 700;
	text-anchor: middle;
}

.close {
	width: 18px;
	margin-left: 86px;
	margin-right: 9px;
}

.menu {
	display: flex;
	align-items: center;
	gap: 23px;
	padding-left: 13px;
	background-image: linear-gradient(#8a8a8a, #4c4c4c);
	color: #fff;
}

/* main toolbar */
.toolbar {
	display: flex;
	align-items: center;
	align-self: flex-start;
	height: 39px;
	padding: 0 10px 2px 2px;
	border: 1px solid #0c0c0c;
	border-left: 5px double #161616;
}

.toolbar .combo {
	align-self: flex-start;
	margin: 5px 0 0 2px;
}

.tool {
	width: 32px;
	height: 32px;
}

.tool.active {
	background-color: #3b80d8;
	border: 1px solid #111;
}

.glyph {
	fill: #ddd;
	font-family: "Liberation Sans", sans-serif;
	font-size: 17px;
}

.pct {
	font-size: 15px;
}

.abc {
	fill: #ddd;
	font-family: "Liberation Sans", sans-serif;
	font-size: 8px;
	font-weight: 700;
}

.combo {
	height: 18px;
	padding-left: 3px;
	background-color: #fff;
	border: 1px solid #111;
	color: #8a8a8a;
}

.filter,
.coord {
	width: 68px;
}

.sets {
	width: 118px;
	padding: 0 14px 0 3px;
	color: #111;
	background-color: #fff;
	border: 2px solid #eee;
	outline: 1px solid #111;
	box-shadow: inset 98px 0 0 #565656;
}

/* ribbon */
.ribbon {
	height: 40px;
	border-left: 5px double #161616;
}

.tabs {
	display: flex;
	align-items: flex-end;
	gap: 2px;
	height: 20px;
	margin-left: 5px;
	padding-left: 4px;
	background-color: #525252;
	border-top: 1px solid #666;
	border-bottom: 1px solid #2c2c2c;
	color: #a8a8a8;
}

.tab {
	height: 18px;
	padding: 0 21px 1px;
}

.tab.current {
	padding: 0 8px 0 20px;
	background-image: linear-gradient(#727272, #525252);
	border: 1px solid #222;
	border-bottom: none;
	color: #d8d8d8;
}

.tab-menu {
	height: 18px;
	margin-left: 6px;
}

.ribbon-body {
	height: 20px;
	margin-left: 5px;
	background-image: linear-gradient(#464646, #3a3a3a);
}

.panel-btn {
	height: 18px;
	margin-left: 2px;
	padding: 0 4px;
	background-color: #4a4a4a;
	border: 1px solid #5c5c5c;
	color: #eee;
}

/* workspace */
.main {
	display: grid;
	grid-template-columns: 40px 1fr 184px;
	flex: 1;
}

.strip {
	display: flex;
	flex-direction: column;
	align-items: center;
	background-image: linear-gradient(to right, #343434, #2c2c2c 80%, #222);
}

.strip-grip {
	align-self: stretch;
	height: 11px;
	margin-bottom: auto;
	background: linear-gradient(#111, #111) 3px 5px / 32px 1px no-repeat #484848;
}

.flyout {
	width: 20px;
	height: 20px;
	background-color: #4c4c4c;
	border: 1px solid #3a3a3a;
	border-radius: 2px;
}

.layout {
	display: grid;
	grid-template-columns: 1fr 1fr;
	gap: 1px;
	align-self: flex-end;
	width: 35px;
	height: 44px;
	margin: 11px 0 2px;
	padding: 7px 1px 8px 4px;
	border-radius: 3px 0 0 3px;
	background-image: linear-gradient(#5878a0, #3b78d0);
}

.layout i {
	align-self: stretch;
	justify-self: stretch;
	border: 1px solid #2c3c55;
	background-color: #566578;
}

.center {
	display: flex;
	flex-direction: column;
	min-width: 0;
}

.viewports {
	display: grid;
	grid-template-columns: 1fr 1fr;
	grid-template-rows: 381fr 385fr;
	gap: 5px;
	flex: 1;
	padding: 1px 0 0 1px;
}

.viewport {
	position: relative;
	overflow: hidden;
	padding: 5px 4px;
	background-color: #393939;
}

/* frame drawn over the scene */
.viewport::after {
	content: "";
	position: absolute;
	inset: 0;
	border: 1px solid #353535;
}

.viewport.selected::after {
	border: 2px solid #7b6826;
}

.scene {
	position: absolute;
	inset: 0;
	width: 100%;
	height: 100%;
}

.label {
	position: relative;
	display: flex;
	gap: 4px;
}

.label span:first-child {
	min-width: 18px;
}

.state {
	margin-left: 2px;
}

.axis {
	font-size: 11px;
}

.compass {
	fill: #6a737d;
	font-size: 11px;
	font-weight: 700;
	text-anchor: middle;
}

.cube-text {
	fill: #4b515a;
	font-family: "Liberation Sans", sans-serif;
	font-size: 8px;
	font-weight: 700;
	text-anchor: middle;
}

.stats {
	position: relative;
	margin: 13px 0 0 10px;
	border-spacing: 0;
	color: #e8d21c;
}

.stats td,
.stats th {
	padding: 0 11px 0 0;
	font-weight: 400;
	text-align: left;
}

/* time slider and track bar */
.slider {
	display: flex;
	height: 20px;
	padding-top: 1px;
	border-bottom: 1px solid #0c0c0c;
}

.step {
	width: 16px;
	border-right: 1px solid #111;
}

.thumb {
	width: 125px;
	height: 18px;
	border: 1px solid #111;
	border-width: 0 2px 2px 1px;
}

.trackbar {
	display: flex;
	height: 25px;
}

.curve-btn {
	width: 44px;
}

.ruler {
	display: flex;
	flex: 1;
	justify-content: space-between;
	margin-right: 50px;
	padding: 0 4px 0 10px;
	background-color: #2a2a2a;
}

.tick {
	display: flex;
	justify-content: center;
	align-items: flex-end;
	width: 1px;
	height: 12px;
	background-color: #777;
}

.tick.major {
	height: 25px;
	line-height: 13px;
	background-image: linear-gradient(#2a2a2a, #2a2a2a);
	background-size: 1px 4px;
	background-position: 0 12px;
	background-repeat: no-repeat;
}

.tick.now {
	background: #857a28;
	box-shadow: 0 0 0 3px #857a28;
	color: #d8cc5c;
}

/* command panel */
.command {
	display: flex;
	flex-direction: column;
	padding: 3px 8px 0 2px;
}

.cmd-tabs {
	display: flex;
	height: 26px;
}

.cmd-tab {
	flex: 1;
	background-color: #353535;
	border: 1px solid #0c0c0c;
	border-radius: 4px 4px 0 0;
}

.cmd-tab.current {
	background-color: #444;
	border-bottom: none;
}

.cmd-body {
	display: flex;
	flex-direction: column;
	padding: 4px 1px 0 9px;
}

.name-row {
	display: flex;
	gap: 4px;
	margin-right: -3px;
}

.field {
	min-width: 0;
	height: 21px;
	background-color: #575757;
	border: 1px solid #4c4c4c;
	border-top: 2px solid #111;
	border-left: 2px solid #111;
}

.name-row .field {
	flex: 1;
}

.swatch {
	width: 17px;
	height: 20px;
	background-color: #890736;
	border: 1px solid #222;
}

.modifiers {
	height: 21px;
	margin: 6px 0;
	padding-left: 2px;
	background-color: #fff;
	border: 1px solid #fff;
	outline: 1px solid #111;
	box-shadow: inset 147px 0 0 #565656;
}

.stack {
	height: 127px;
	margin-right: 2px;
	background-color: #565656;
	border: 2px solid #e8e8e8;
}

.stack-tools {
	display: flex;
	align-items: center;
	justify-content: space-between;
	height: 32px;
	padding: 0 12px 0 3px;
}

.mini {
	min-width: 18px;
	height: 22px;
}

.mini.pressed {
	width: 24px;
	border: 1px solid #222;
}

.rollout {
	flex: 1;
	margin: 6px -2px 0 2px;
	border-top: 2px solid #0c0c0c;
	border-bottom: 1px solid #111;
	background: linear-gradient(#111, #111) 0 8px / 100% 1px no-repeat;
}

/* status area */
.status {
	display: flex;
	height: 50px;
	padding: 4px 0 1px;
}

.listener {
	width: 99px;
	margin-top: -2px;
	padding: 2px 2px 0;
	background-color: #f0f0f0;
}

.macro {
	height: 20px;
	margin-bottom: 3px;
	background-color: #dcc2c4;
}

.script {
	width: 95px;
	height: 20px;
	padding-left: 5px;
	color: #000;
	background-color: #fff;
	font-family: "Liberation Mono", monospace;
	font-size: 12px;
}

.prompt {
	display: flex;
	flex-direction: column;
	gap: 3px;
	flex: 1;
	margin-left: 5px;
	padding-left: 2px;
	border-left: 1px solid #111;
}

.box {
	display: block;
	height: 21px;
	padding: 2px 5px;
	border: 1px solid #505050;
	border-top-color: #111;
	border-left-color: #111;
	text-align: left;
}

.grow {
	flex: 1;
}

.prompt .mini {
	width: 27px;
}

.coord-field {
	display: flex;
	align-items: center;
	gap: 2px;
	margin-right: 14px;
}

.coord-field .field {
	width: 57px;
}

.cube-btn {
	width: 22px;
	height: 21px;
	margin: 0 3px;
	background-color: #3b80d8;
	border: 1px solid #111;
}

.grid-col {
	display: flex;
	flex-direction: column;
	gap: 3px;
	width: 100px;
}

.key-btn {
	width: 44px;
	height: 44px;
	margin: 0 3px;
	border: 1px solid #111;
	border-top-color: #383838;
}

.key-col {
	display: flex;
	flex-direction: column;
	gap: 1px;
	width: 48px;
	margin-right: 3px;
}

.flat {
	height: 22px;
	border: 1px solid #111;
	border-top-color: #383838;
	color: #dcdcdc;
}

.filter-col {
	display: flex;
	flex-direction: column;
	gap: 3px;
	width: 116px;
}

.keymode {
	height: 20px;
}

.tangent {
	width: 26px;
}

.filters {
	flex: 1;
}

.play {
	display: flex;
	flex-direction: column;
	width: 131px;
	padding: 0 5px 0 7px;
}

.play .row {
	justify-content: space-between;
	height: 23px;
}

.play .sep {
	margin: 0;
}

.pl {
	fill: #888;
	stroke: #e4e4e4;
}

.frame {
	width: 64px;
	padding-left: 2px;
}

.spin {
	width: 11px;
	height: 20px;
	border: 1px solid #222;
}

.nav {
	display: grid;
	grid-template-columns: repeat(4, 1fr);
	width: 95px;
}

/* taskbar */
.taskbar {
	display: flex;
	align-items: center;
	height: 33px;
	background-image: linear-gradient(#4e565e, #363b3f);
	border-bottom: 1px solid #111;
}

.start {
	width: 50px;
}

.task-sep {
	width: 4px;
	height: 18px;
	margin-right: 5px;
	border-left: 1px solid #222;
	border-right: 1px solid #222;
}

.task {
	width: 44px;
	height: 26px;
	margin-right: 2px;
	border: 1px solid #34393e;
	border-radius: 3px;
	background-color: #40464c;
}

.task.open {
	background-color: #26292c;
	border-color: #1c1e20;
}

.tray {
	display: flex;
	align-items: center;
	gap: 10px;
	margin-left: auto;
	padding-right: 20px;
	color: #fff;
}

.clock {
	display: flex;
	flex-direction: column;
	align-items: center;
	margin-left: 4px;
	line-height: 14px;
}
```
